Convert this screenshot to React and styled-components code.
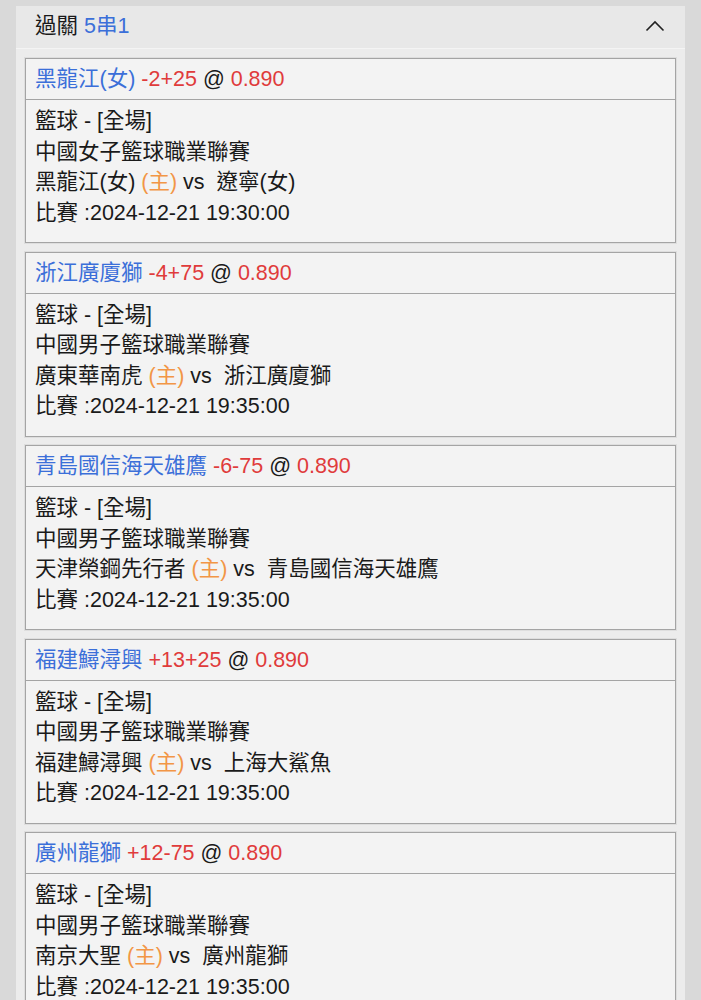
import React from 'react'
import styled, { createGlobalStyle } from 'styled-components'

const GlobalStyle = createGlobalStyle`
  html, body {
    margin: 0;
    padding: 0;
    background: #d9d9d9;
  }
  body {
    font-family: "Liberation Sans", "Noto Sans CJK TC", Arial, sans-serif;
    color: #1a1a1a;
  }
`

const bets = [
  {
    pick: '黑龍江(女)', line: '-2+25', odds: '0.890',
    league: '中國女子籃球職業聯賽', home: '黑龍江(女)', away: '遼寧(女)',
    time: '2024-12-21 19:30:00'
  },
  {
    pick: '浙江廣廈獅', line: '-4+75', odds: '0.890',
    league: '中國男子籃球職業聯賽', home: '廣東華南虎', away: '浙江廣廈獅',
    time: '2024-12-21 19:35:00'
  },
  {
    pick: '青島國信海天雄鷹', line: '-6-75', odds: '0.890',
    league: '中國男子籃球職業聯賽', home: '天津榮鋼先行者', away: '青島國信海天雄鷹',
    time: '2024-12-21 19:35:00'
  },
  {
    pick: '福建鱘潯興', line: '+13+25', odds: '0.890',
    league: '中國男子籃球職業聯賽', home: '福建鱘潯興', away: '上海大鯊魚',
    time: '2024-12-21 19:35:00'
  },
  {
    pick: '廣州龍獅', line: '+12-75', odds: '0.890',
    league: '中國男子籃球職業聯賽', home: '南京大聖', away: '廣州龍獅',
    time: '2024-12-21 19:35:00'
  },
]

const App = () => {
  return (
    <>
      <GlobalStyle />
      <Page>
        <Panel>
          <PanelHeader>
            <HeaderTitle>
              過關 <Blue>5串1</Blue>
            </HeaderTitle>
            <Chevron width="20" height="12" viewBox="0 0 20 12">
              <polyline points="1.5,10.5 10,2 18.5,10.5" fill="none" stroke="#222" strokeWidth="1.6" />
            </Chevron>
          </PanelHeader>

          <PanelBody>
            {bets.map((bet, index) => (
              <BetCard key={index}>
                <BetTitle>
                  <Blue>{bet.pick}</Blue> <Red>{bet.line}</Red> @ <Red>{bet.odds}</Red>
                </BetTitle>
                <BetBody>
                  <BetLine>籃球 - [全場]</BetLine>
                  <BetLine>{bet.league}</BetLine>
                  <BetLine>
                    {bet.home} <Orange>(主)</Orange> vs&nbsp; {bet.away}
                  </BetLine>
                  <BetLine>比賽 :{bet.time}</BetLine>
                </BetBody>
              </BetCard>
            ))}
          </PanelBody>
        </Panel>
      </Page>
    </>
  )
}

export default App

const Page = styled.div`
  padding: 6px 16px 0;
  height: 1000px;
  box-sizing: border-box;
  overflow: hidden;
`

const Panel = styled.section`
  background: #ececec;
`

const PanelHeader = styled.header`
  display: flex;
  align-items: center;
  justify-content: space-between;
  height: 42px;
  padding: 0 20px 0 19px;
  background: #e8e8e8;
  border-bottom: 1px solid #f4f4f4;
`

const HeaderTitle = styled.div`
  font-size: 21.5px;
  line-height: 1;
  color: #1a1a1a;
`

const Chevron = styled.svg`
  display: block;
  margin-top: -2px;
`

const PanelBody = styled.div`
  display: flex;
  flex-direction: column;
  gap: 8.5px;
  padding: 9px 9px 0;
`

const BetCard = styled.article`
  background: #f3f3f3;
  border: 1px solid #a4a4a4;
  box-shadow: 0 0 0 1px #dedede;
`

const BetTitle = styled.div`
  height: 40px;
  line-height: 40px;
  padding: 0 9px;
  font-size: 21.5px;
  white-space: nowrap;
  border-bottom: 1px solid #a4a4a4;
`

const BetBody = styled.div`
  padding: 6px 9px 14px;
  height: 122px;
`

const BetLine = styled.div`
  font-size: 21.5px;
  line-height: 30.5px;
  white-space: nowrap;
`

const Blue = styled.span`
  color: #3b6fd9;
`

const Red = styled.span`
  color: #e03b3b;
`

const Orange = styled.span`
  color: #f29646;
`
